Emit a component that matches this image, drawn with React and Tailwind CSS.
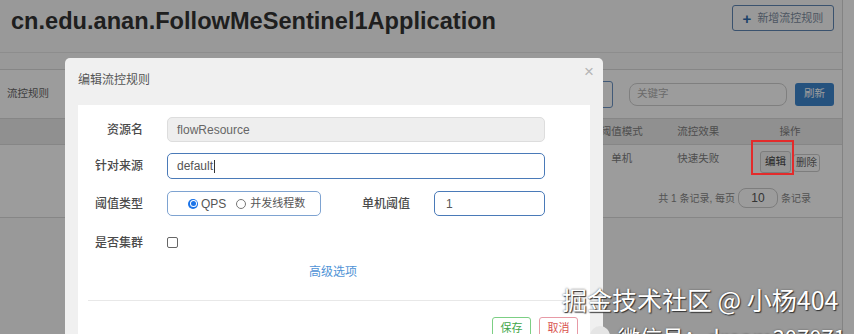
import React from 'react';

const font = "font-['Liberation_Sans','Noto_Sans_CJK_SC',sans-serif]";

function Radio({ checked }) {
  return checked ? (
    <span className="flex h-[10px] w-[10px] items-center justify-center rounded-full bg-[#1a73e8]">
      <span className="flex h-[7px] w-[7px] items-center justify-center rounded-full bg-white">
        <span className="h-[5px] w-[5px] rounded-full bg-[#1a73e8]" />
      </span>
    </span>
  ) : (
    <span className="block h-[10px] w-[10px] rounded-full border border-[#767676] bg-white" />
  );
}

function FormLabel({ children }) {
  return <label className="block w-[55px] shrink-0 text-right text-[12px] font-medium text-[#4a4a4a]">{children}</label>;
}

function EditDialog() {
  return (
    <div className="absolute left-[65px] top-[58px] h-[300px] w-[538px] rounded-t-[5px] bg-[#f0f0f0] px-[13px] pt-[14px]">
      <div className="flex items-center justify-between">
        <h3 className="text-[12px] leading-[16px] text-[#555]">编辑流控规则</h3>
        <span className="-mt-[18px] mr-[-4px] text-[17px] leading-none text-[#b5b5b5]">×</span>
      </div>
      <div className="mt-[17px] h-[260px] bg-white pl-[10px] pr-[12px] pt-[12px]">
        <div className="flex h-[25px] items-center gap-[24px]">
          <FormLabel>资源名</FormLabel>
          <div className="flex h-[25px] w-[378px] items-center rounded-[5px] border border-[#ddd] bg-[#eee] px-[9px] text-[12px] text-[#666]">
            flowResource
          </div>
        </div>
        <div className="mt-[11px] flex h-[26px] items-center gap-[24px]">
          <FormLabel>针对来源</FormLabel>
          <div className="flex h-[26px] w-[378px] items-center rounded-[5px] border border-[#4a7ab8] bg-white px-[9px] text-[12px] text-[#555]">
            default<span className="ml-px h-[13px] w-px bg-[#333]" />
          </div>
        </div>
        <div className="mt-[12px] flex h-[25px] items-center">
          <FormLabel>阈值类型</FormLabel>
          <div className="ml-[24px] flex h-[25px] w-[154px] items-center rounded-[5px] border border-[#7ea3d1] pl-[20px] text-[#555]">
            <Radio checked />
            <span className="ml-[3px] text-[12px]">QPS</span>
            <span className="ml-[10px]"><Radio /></span>
            <span className="ml-[4px] text-[11px]">并发线程数</span>
          </div>
          <div className="ml-[34px]"><FormLabel>单机阈值</FormLabel></div>
          <div className="ml-[24px] flex h-[25px] w-[111px] items-center rounded-[5px] border border-[#4a7ab8] px-[11px] text-[12px] text-[#555]">
            1
          </div>
        </div>
        <div className="mt-[14px] flex h-[25px] items-center gap-[24px]">
          <FormLabel>是否集群</FormLabel>
          <span className="h-[11px] w-[11px] rounded-[2px] border border-[#666] bg-white" />
        </div>
        <div className="mt-[9px] text-center text-[12px] leading-[16px] text-[#4f93d6]">高级选项</div>
        <div className="mt-[20px] border-t border-[#e8e8e8]" />
        <div className="mt-[16px] flex justify-end gap-[8px]">
          <button className="h-[22px] w-[39px] rounded-[3px] border border-[#7ccf84] text-[11px] text-[#3fa64a]">保存</button>
          <button className="h-[22px] w-[39px] rounded-[3px] border border-[#e79aa6] text-[11px] text-[#d9534f]">取消</button>
        </div>
      </div>
    </div>
  );
}

function RulesPanel() {
  return (
    <section className="mt-[16px] border-y border-[#dcdcdc] bg-white">
      <div className="flex h-[48px] items-center pl-[7px] pr-[8px]">
        <span className="text-[10.5px] text-[#666]">流控规则</span>
        <div className="ml-auto h-[27px] w-[120px] rounded-r-[3px] border border-[#6d94c4]" />
        <div className="ml-[16px] flex h-[23px] w-[158px] items-center rounded-[8px] border border-[#d0d0d0] px-[7px] text-[10.5px] text-[#b0b0b0]">
          关键字
        </div>
        <button className="ml-[8px] h-[23px] w-[39px] rounded-[3px] bg-[#3d86cf] text-[10.5px] text-white">刷新</button>
      </div>
      <div className="flex h-[27px] items-center border-y border-[#dcdcdc] bg-[#ebebeb] text-[10.5px] text-[#808080]">
        <div className="w-[586px]" />
        <div className="w-[73px] text-center">阈值模式</div>
        <div className="w-[80px] text-center">流控效果</div>
        <div className="w-[104px] text-center">操作</div>
      </div>
      <div className="flex h-[34px] items-start pt-[6px] text-[10.5px] text-[#808080]">
        <div className="w-[586px]" />
        <div className="w-[73px] text-center">单机</div>
        <div className="w-[80px] text-center">快速失败</div>
        <div className="flex w-[104px] justify-center gap-[2px]">
          <button className="h-[22px] w-[31px] rounded-[3px] border border-[#ccc] bg-[#f4f4f4] text-[10.5px] text-[#444]">编辑</button>
          <button className="mt-[3px] h-[18px] w-[27px] rounded-[3px] border border-[#ccc] bg-white text-[10.5px] text-[#666]">删除</button>
        </div>
      </div>
      <div className="flex h-[38px] items-center justify-end pr-[31px] text-[10px] text-[#888]">
        <span>共 1 条记录, 每页</span>
        <span className="mx-[3px] flex h-[20px] w-[40px] items-center justify-center rounded-[8px] border border-[#ccc] text-[12px] text-[#555]">10</span>
        <span>条记录</span>
      </div>
    </section>
  );
}

export default function App() {
  return (
    <div className={`relative h-[334px] w-[854px] overflow-hidden bg-white ${font}`}>
      <div className="flex h-full">
        <main className="h-full w-[843px] border-r border-[#d6d6d6] bg-[#fafafa]">
          <header className="flex h-[53px] items-start justify-between border-b border-[#e6e6e6] pl-[11px] pr-[8px]">
            <h1 className="mt-[7px] text-[23.6px] font-bold leading-[28px] text-[#333]">
              cn.edu.anan.FollowMeSentinel1Application
            </h1>
            <button className="mt-[5px] flex h-[26px] w-[102px] items-center justify-center gap-[6px] rounded-[3px] border border-[#5f86b4] text-[11px] text-[#7d8da1]">
              <span className="text-[15px] font-bold leading-none text-[#2f6cad]">+</span>
              新增流控规则
            </button>
          </header>
          <RulesPanel />
        </main>
        <div className="flex-1 bg-white" />
      </div>

      <div className="absolute inset-0 bg-black/[0.39]" />

      <EditDialog />

      <div className="absolute left-[751px] top-[140px] h-[35px] w-[43px] border-2 border-[#e32b2b]" />

      <div className="absolute left-[562px] top-[282px] text-white [text-shadow:1px_1px_1px_#333,0_0_2px_#555]">
        <div className="font-['Noto_Sans_CJK_SC',sans-serif] text-[25px] leading-[34px]">掘金技术社区 @ 小杨404</div>
        <div className="mt-[6px] flex items-center gap-[8px] pl-[28px] text-[22px] leading-[28px]">
          <span className="h-[20px] w-[20px] rounded-full bg-[#e5e5e5]" />
          <span className="font-['Noto_Sans_CJK_SC',sans-serif]">微信号：dream307071</span>
        </div>
      </div>
    </div>
  );
}
